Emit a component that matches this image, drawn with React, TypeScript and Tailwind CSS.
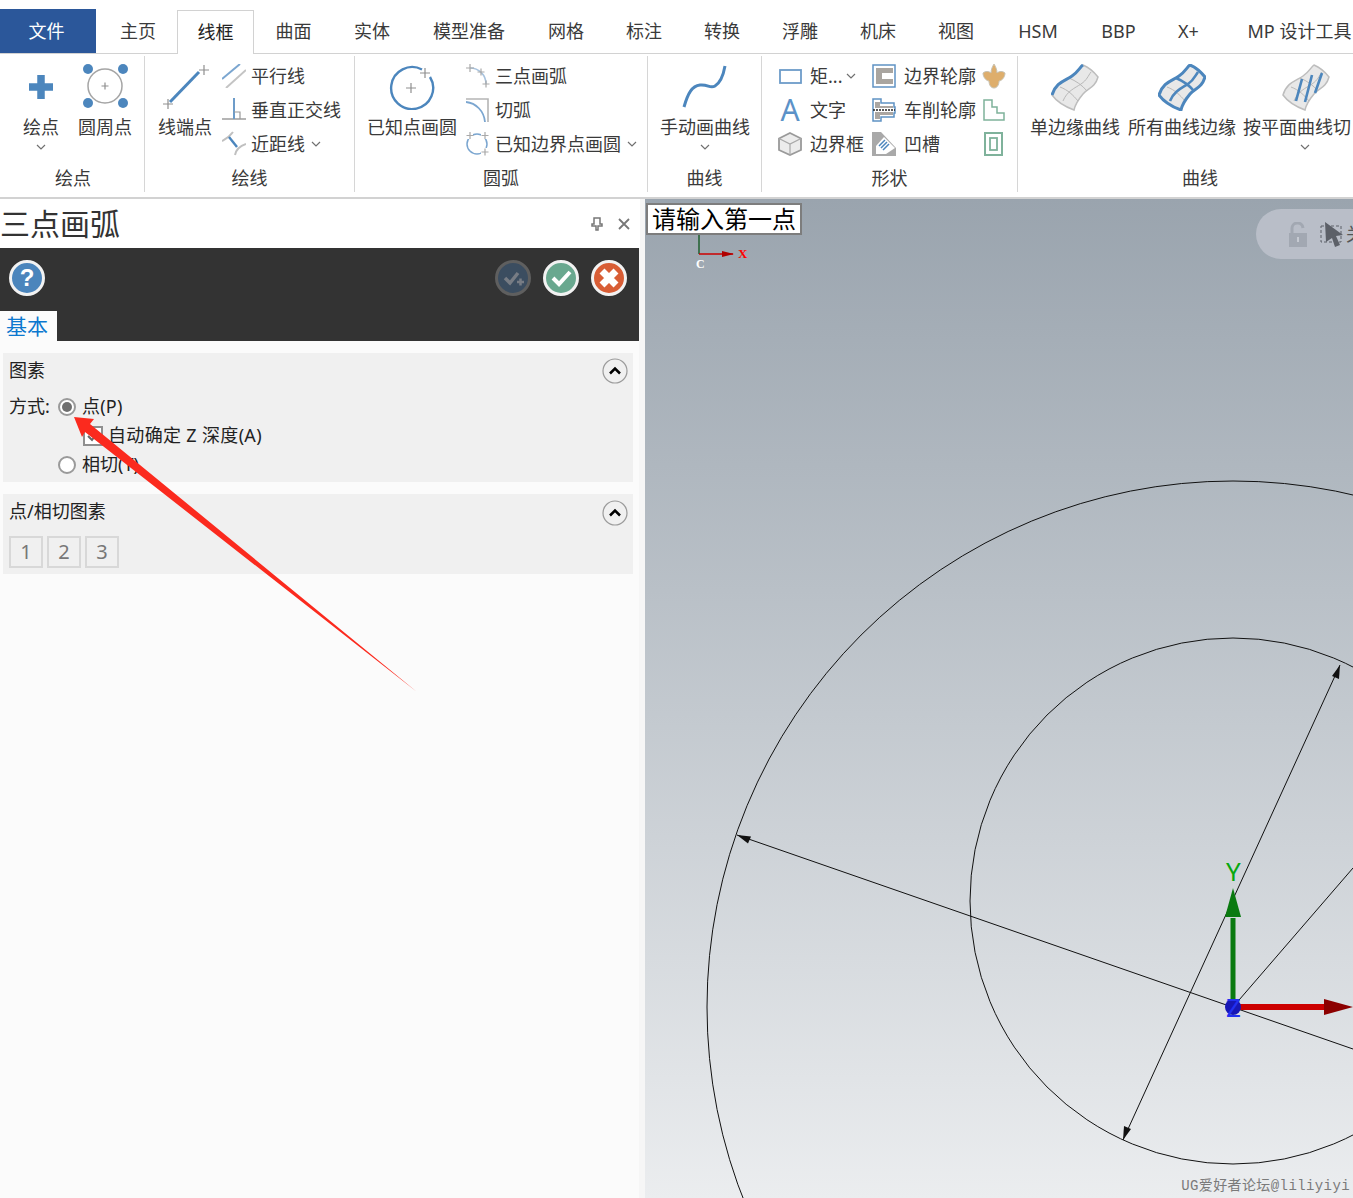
type IconProps = { className?: string }

const BLUE = "#4c86bd"
const GREY = "#8f8f8f"

const Plus = ({ x, y, s = 4, c = GREY, w = 1.2 }: { x: number; y: number; s?: number; c?: string; w?: number }) => (
  <path d={`M${x - s} ${y}H${x + s}M${x} ${y - s}V${y + s}`} stroke={c} strokeWidth={w} fill="none" />
)

const Chevron = ({ className }: IconProps) => (
  <svg width="10" height="6" viewBox="0 0 10 6" className={className}>
    <path d="M1 1l4 4 4-4" fill="none" stroke="#707070" strokeWidth="1.2" />
  </svg>
)

const CrossIcon = () => (
  <svg width="26" height="26" viewBox="0 0 26 26">
    <path d="M13 1v24M1 13h24" stroke={BLUE} strokeWidth="7.5" />
  </svg>
)

const CirclePointsIcon = () => (
  <svg width="46" height="46" viewBox="0 0 46 46">
    <circle cx="23" cy="22" r="17" fill="none" stroke="#a5a5a5" strokeWidth="1.5" />
    <Plus x={23} y={22} s={3.5} />
    <circle cx="6" cy="5" r="5" fill={BLUE} />
    <circle cx="41" cy="5" r="5" fill={BLUE} />
    <circle cx="6" cy="39" r="5" fill={BLUE} />
    <circle cx="41" cy="39" r="5" fill={BLUE} />
  </svg>
)

const LineIcon = () => (
  <svg width="48" height="46" viewBox="0 0 48 46">
    <path d="M9 38L38 8" stroke={BLUE} strokeWidth="3" />
    <Plus x={43} y={6} s={5} />
    <Plus x={7} y={40} s={5} />
  </svg>
)

const ParallelIcon = () => (
  <svg width="24" height="24" viewBox="0 0 24 24">
    <path d="M0 15L18 0" stroke="#7ba6d0" strokeWidth="2" />
    <path d="M4 24L24 6" stroke="#c4c4c4" strokeWidth="2" />
  </svg>
)

const PerpIcon = () => (
  <svg width="24" height="24" viewBox="0 0 24 24">
    <path d="M0 21H24" stroke="#b5b5b5" strokeWidth="2" />
    <path d="M12 0V21" stroke="#6d9cc9" strokeWidth="2" />
    <path d="M12 14H18V21" stroke="#9a9a9a" strokeWidth="1.2" fill="none" />
  </svg>
)

const ClosestIcon = () => (
  <svg width="24" height="26" viewBox="0 0 24 26">
    <path d="M0 10C4 8 8 5 11 1" stroke="#c0c0c0" strokeWidth="2" fill="none" />
    <path d="M13 24C14 19 18 15 24 13" stroke="#c0c0c0" strokeWidth="2" fill="none" />
    <path d="M7 6L15 16" stroke={BLUE} strokeWidth="2.4" />
  </svg>
)

const KnownPointCircleIcon = () => (
  <svg width="46" height="46" viewBox="0 0 46 46">
    <path d="M33 5.500A21 21 0 1 0 41 13" fill="none" stroke={BLUE} strokeWidth="2.4" />
    <Plus x={22} y={24} s={5} />
    <Plus x={36} y={9} s={5} />
  </svg>
)

const ThreePointArcIcon = () => (
  <svg width="24" height="24" viewBox="0 0 24 24">
    <path d="M4 4A16 16 0 0 1 20 20" fill="none" stroke="#a8c3de" strokeWidth="1.6" />
    <Plus x={4} y={4} s={4} c="#a9a9a9" />
    <Plus x={15} y={8} s={3.500} c="#a9a9a9" />
    <Plus x={20} y={20} s={3.500} c="#a9a9a9" />
  </svg>
)

const TangentArcIcon = () => (
  <svg width="24" height="24" viewBox="0 0 24 24">
    <path d="M0 1H22V24" fill="none" stroke="#b5b5b5" strokeWidth="1.600" />
    <path d="M0 4C10 5 18 13 19 24" fill="none" stroke="#7ba6d0" strokeWidth="1.800" />
  </svg>
)

const BoundaryCircleIcon = () => (
  <svg width="24" height="24" viewBox="0 0 24 24">
    <circle cx="11" cy="12" r="10" fill="none" stroke="#7ba6d0" strokeWidth="1.500" />
    <path d="M0 0h7v7H0zM15 0h9v7h-9zM15 16h9v8h-9z" fill="#ffffff" />
    <Plus x={4} y={3.500} s={3.500} c="#a9a9a9" />
    <Plus x={19} y={3.500} s={3.500} c="#a9a9a9" />
    <Plus x={19} y={20} s={3.500} c="#a9a9a9" />
  </svg>
)

const CurveIcon = () => (
  <svg width="46" height="46" viewBox="0 0 46 46">
    <path d="M2 43C6 29 10 22 18 21S28 25 33 22S41 13 43 2" fill="none" stroke={BLUE} strokeWidth="3" />
  </svg>
)

const RectIcon = () => (
  <svg width="24" height="24" viewBox="0 0 24 24">
    <rect x="2" y="6" width="21" height="13" fill="none" stroke="#6d9cc9" strokeWidth="1.800" />
  </svg>
)

const CubeIcon = () => (
  <svg width="24" height="24" viewBox="0 0 24 24">
    <path d="M12 1L23 6.500V18L12 23L1 18V6.500Z" fill="#ececec" stroke="#9a9a9a" strokeWidth="1.800" />
    <path d="M1 6.500L12 12L23 6.500M12 12V23" fill="none" stroke="#a8a8a8" strokeWidth="1.200" />
  </svg>
)

const BoundaryProfileIcon = () => (
  <svg width="24" height="24" viewBox="0 0 24 24">
    <rect x="1" y="1" width="22" height="22" fill="#ffffff" stroke="#5f92c4" strokeWidth="1.500" />
    <path d="M4 4H21V9H10V15H21V20H4Z" fill="#a9a5a0" />
  </svg>
)

const TurnProfileIcon = () => (
  <svg width="24" height="24" viewBox="0 0 24 24">
    <path d="M1 1H9V5H22V9H23V15H22V19H9V23H1Z" fill="#ffffff" stroke="#5f92c4" strokeWidth="1.500" />
    <path d="M3 4H8V8H21V10H3ZM3 14H21V17H8V21H3Z" fill="#aaa6a2" />
    <path d="M1 12H23" stroke="#222" strokeWidth="1.600" strokeDasharray="2 1" />
  </svg>
)

const GrooveIcon = () => (
  <svg width="24" height="24" viewBox="0 0 24 24">
    <path d="M0 0H9L24 16V24H0Z" fill="#a9a9a9" />
    <path d="M12 5L23 16L14 22H4V14Z" fill="#ffffff" />
    <path d="M7 14L13 8M9 16L15 10M11 18L17 12" stroke={BLUE} strokeWidth="1.500" />
  </svg>
)

const HandIcon = () => (
  <svg width="24" height="25" viewBox="0 0 24 25">
    <path
      d="M12 0C14 3 15 6 15 9C17 7 21 7 23 9C23 14 19 17 17 17C17 21 15 24 12 24C9 24 7 21 7 17C5 17 1 14 1 9C3 7 7 7 9 9C9 6 10 3 12 0Z"
      fill="#deae6c"
      stroke="#c8c3b4"
    />
  </svg>
)

const StairIcon = () => (
  <svg width="24" height="24" viewBox="0 0 24 24">
    <path d="M2 2H10V9H15V15H22V22H2Z" fill="none" stroke="#7fb29b" strokeWidth="1.500" />
  </svg>
)

const FrameIcon = () => (
  <svg width="24" height="24" viewBox="0 0 24 24">
    <rect x="3" y="1" width="17" height="22" fill="none" stroke="#7fb29b" strokeWidth="2" />
    <rect x="8" y="6" width="7" height="12" fill="none" stroke="#7fb29b" strokeWidth="1.800" />
  </svg>
)

const SURFACE = "M1 31C5 18 14 17 21 12S29 3 32 1C37 3 43 8 47 13C44 24 37 24 32 30S24 41 23 46C15 43 6 38 1 31Z"

const SurfaceIcon = ({ kind }: { kind: 1 | 2 | 3 }) => (
  <svg width="48" height="47" viewBox="0 0 48 47">
    <path d={SURFACE} fill="#e8e8e8" stroke="#bdbdbd" strokeWidth="1.500" />
    <path d="M9 23C17 26 22 31 27 37M18 14C25 17 31 21 36 27M12 37C16 27 24 24 30 20S37 12 40 8" fill="none" stroke="#b8b8b8" />
    {kind === 1 && <path d="M1 31C5 18 14 17 21 12S29 3 32 1" fill="none" stroke={BLUE} strokeWidth="3" />}
    {kind === 2 && (
      <>
        <path d={SURFACE} fill="none" stroke={BLUE} strokeWidth="3" />
        <path d="M12 37C16 27 24 24 30 20S37 12 40 8M18 14C25 17 31 21 36 27" fill="none" stroke={BLUE} strokeWidth="2.600" />
      </>
    )}
    {kind === 3 && <path d="M14 37L20 15M23 38L30 11M33 29L40 9" fill="none" stroke={BLUE} strokeWidth="2.600" />}
  </svg>
)

const Round = ({ bg, ring, children }: { bg: string; ring: string; children: React.ReactNode }) => (
  <svg width="36" height="36" viewBox="0 0 36 36">
    <circle cx="18" cy="18" r="16.500" fill={bg} stroke={ring} strokeWidth="3" />
    {children}
  </svg>
)

const Collapse = () => (
  <svg width="26" height="26" viewBox="0 0 26 26" className="mr-[-1px] mt-[2px]">
    <circle cx="13" cy="13" r="12" fill="#f0f0f0" stroke="#9b9b9b" strokeWidth="1.200" />
    <path d="M8 15.500l5-5 5 5" fill="none" stroke="#000" strokeWidth="2.500" />
  </svg>
)

const Radio = ({ on }: { on?: boolean }) => (
  <span className="flex h-[18px] w-[18px] shrink-0 items-center justify-center rounded-full border-2 border-[#9a9a9a] bg-white">
    {on && <span className="h-[10px] w-[10px] rounded-full bg-[#6f6f6f]" />}
  </span>
)

const Large = ({ icon, label, chevron, w, chevronClass = "mt-[5px]" }: { icon: React.ReactNode; label: string; chevron?: boolean; w: string; chevronClass?: string }) => (
  <div className={`flex shrink-0 flex-col items-center ${w}`}>
    <div className="flex h-[46px] items-center justify-center">{icon}</div>
    <div className="mt-[5px] h-[24px] whitespace-nowrap leading-[24px]">{label}</div>
    {chevron && <Chevron className={chevronClass} />}
  </div>
)

const Small = ({ icon, label, chevron, gap = "gap-[5px]", chevronClass = "ml-[1px]" }: { icon: React.ReactNode; label?: string; chevron?: boolean; gap?: string; chevronClass?: string }) => (
  <div className={`flex h-[34px] items-center ${gap}`}>
    <div className="flex w-[24px] shrink-0 justify-center">{icon}</div>
    {label && <span className="whitespace-nowrap">{label}</span>}
    {chevron && <Chevron className={chevronClass} />}
  </div>
)

const Group = ({ label, className, children }: { label: string; className: string; children: React.ReactNode }) => (
  <div className={`mt-[2px] flex h-[136px] shrink-0 flex-col ${className}`}>
    <div className="flex flex-1 items-start">{children}</div>
    <div className="mb-[2px] h-[24px] text-center leading-[24px]">{label}</div>
  </div>
)

const tabs = [
  { t: "主页", w: "w-[78px]" },
  { t: "线框", w: "w-[77px]", active: true },
  { t: "曲面", w: "w-[79px]" },
  { t: "实体", w: "w-[78px]" },
  { t: "模型准备", w: "w-[116px]" },
  { t: "网格", w: "w-[78px]" },
  { t: "标注", w: "w-[78px]" },
  { t: "转换", w: "w-[78px]" },
  { t: "浮雕", w: "w-[78px]" },
  { t: "机床", w: "w-[78px]" },
  { t: "视图", w: "w-[78px]" },
  { t: "HSM", w: "w-[86px]" },
  { t: "BBP", w: "w-[75px]" },
  { t: "X+", w: "w-[65px]" },
  { t: "MP 设计工具", w: "w-[157px]" },
]

const Viewport = () => (
  <div className="relative flex-1 overflow-hidden bg-linear-to-b from-[#9aa4ae] to-[#ebedef]">
    <svg viewBox="645 199 708 999" width="708" height="999" className="block">
      {/* wireframe */}
      <g fill="none" stroke="#111" strokeWidth="1">
        <circle cx="1233" cy="1007" r="526" />
        <circle cx="1233" cy="901" r="263" />
        <path d="M737 835L1353 1049" />
        <path d="M1123 1140L1340 665" />
        <path d="M1233 1007L1353 868" />
      </g>
      <path d="M737 835l14 1.500-3 7z" fill="#111" />
      <path d="M1340 665l-1 14-7-3z" fill="#111" />
      <path d="M1123 1140l1-14 7 3z" fill="#111" />
      {/* small axis */}
      <path d="M699 234V254" stroke="#1f5f2f" strokeWidth="1.500" />
      <path d="M699 254H733" stroke="#c00" strokeWidth="1.500" />
      <path d="M722 251L734 254L722 257Z" fill="#b00000" />
      <text x="738" y="258" fill="#f00" fontSize="13" fontWeight="700" fontFamily="Liberation Serif">X</text>
      <text x="696" y="268" fill="#fff" fontSize="12" fontWeight="700" fontFamily="Liberation Serif">C</text>
      {/* origin triad */}
      <path d="M1233 918V1000" stroke="#0a7a10" strokeWidth="5" />
      <path d="M1233 888L1241 917H1225Z" fill="#0a7a10" />
      <path d="M1240 1007H1325" stroke="#cc0000" strokeWidth="6" />
      <path d="M1324 999L1353 1007L1324 1015Z" fill="#8c0000" />
      <circle cx="1233" cy="1007" r="8" fill="#1717b5" />
      <text x="1226" y="881" fill="#07a80f" fontSize="26" fontFamily="Noto Sans">Y</text>
      <text x="1226" y="1017" fill="#2230f0" fontSize="26" fontFamily="Noto Sans">Z</text>
    </svg>

    <div className="absolute left-[1px] top-[4px] flex h-[32px] w-[156px] items-center justify-center border-2 border-[#7d7d7d] bg-white pb-[1px] text-[24px] leading-none text-black">
      请输入第一点
    </div>

    <div className="absolute left-[611px] top-[10px] flex h-[50px] w-[120px] items-center overflow-hidden rounded-l-full bg-[#b9bec8]">
      <svg width="20" height="25" viewBox="0 0 20 25" className="ml-[32px] shrink-0">
        <path d="M4 11V7A5.500 5.500 0 0 1 15 6" fill="none" stroke="#a2a8b2" strokeWidth="3" />
        <rect x="1" y="11" width="18" height="14" fill="#a2a8b2" />
        <rect x="9" y="15" width="2" height="5" fill="#c6cad2" />
      </svg>
      <svg width="24" height="26" viewBox="0 0 24 26" className="ml-[12px] shrink-0">
        <rect x="1" y="5" width="20" height="16" fill="none" stroke="#5c6068" strokeDasharray="3 2" />
        <path d="M5 1L23 14L16 15L20 24L15 26L12 17L6 21Z" fill="#5c6068" />
      </svg>
      <span className="ml-[2px] shrink-0 whitespace-nowrap text-[18px] text-[#555]">关闭</span>
    </div>

    <div className="absolute bottom-[3px] right-[3px] font-['Liberation_Mono','Noto_Sans_CJK_SC',monospace] text-[14px] leading-[17px] tracking-[0.4px] text-[#7a7a7a]">
      UG爱好者论坛@liliyiyi
    </div>
  </div>
)

const App = () => {
  return (
    <div className="relative flex h-[1198px] w-full flex-col overflow-hidden bg-white font-['Noto_Sans','Noto_Sans_CJK_SC',sans-serif] text-[18px] text-[#3a3a3a]">
      {/* tabs */}
      <div className="flex h-[54px] shrink-0 items-end border-b border-[#d2d2d2] whitespace-nowrap">
        <div className="flex h-[44px] w-[96px] shrink-0 items-center justify-center bg-[#2b579a] pr-[3px] text-white">文件</div>
        <div className="ml-[3px] flex items-end">
          {tabs.map((tab) =>
            tab.active ? (
              <div
                key={tab.t}
                className={`-mb-px flex h-[44px] shrink-0 items-center justify-center border-x border-t border-[#d2d2d2] bg-white text-[#222] ${tab.w}`}
              >
                {tab.t}
              </div>
            ) : (
              <div key={tab.t} className={`flex h-[44px] shrink-0 items-center justify-center ${tab.w}`}>
                {tab.t}
              </div>
            ),
          )}
        </div>
      </div>

      {/* ribbon */}
      <div className="flex h-[145px] shrink-0 border-b-2 border-[#d2d2d2]">
        <Group label="绘点" className="w-[145px] border-r border-[#d6d6d6] pl-[2px]">
          <div className="flex pl-[21px] pt-[8px]">
            <Large w="w-[36px]" icon={<CrossIcon />} label="绘点" chevron />
            <Large w="ml-[19px] w-[54px]" icon={<CirclePointsIcon />} label="圆周点" />
          </div>
        </Group>
        <Group label="绘线" className="w-[210px] border-r border-[#d6d6d6]">
          <div className="flex pl-[13px] pt-[8px]">
            <Large w="w-[54px]" icon={<LineIcon />} label="线端点" />
            <div className="-mt-[5px] ml-[10px]">
              <Small icon={<ParallelIcon />} label="平行线" />
              <Small icon={<PerpIcon />} label="垂直正交线" />
              <Small icon={<ClosestIcon />} label="近距线" chevron />
            </div>
          </div>
        </Group>
        <Group label="圆弧" className="w-[293px] border-r border-[#d6d6d6]">
          <div className="flex pl-[12px] pt-[8px]">
            <Large w="w-[90px]" icon={<KnownPointCircleIcon />} label="已知点画圆" />
            <div className="-mt-[5px] ml-[9px]">
              <Small icon={<ThreePointArcIcon />} label="三点画弧" />
              <Small icon={<TangentArcIcon />} label="切弧" />
              <Small icon={<BoundaryCircleIcon />} label="已知边界点画圆" chevron />
            </div>
          </div>
        </Group>
        <Group label="曲线" className="w-[114px] border-r border-[#d6d6d6]">
          <div className="pl-[12px] pt-[8px]">
            <Large w="w-[90px]" icon={<CurveIcon />} label="手动画曲线" chevron />
          </div>
        </Group>
        <Group label="形状" className="w-[256px] border-r border-[#d6d6d6]">
          <div className="flex pl-[16px] pt-[3px]">
            <div className="w-[94px]">
              <Small gap="gap-[8px]" icon={<RectIcon />} label="矩..." chevron chevronClass="-ml-[4px]" />
              <Small gap="gap-[8px]" icon={<span className="text-[30px] leading-none text-[#5c92c8]">A</span>} label="文字" />
              <Small gap="gap-[8px]" icon={<CubeIcon />} label="边界框" />
            </div>
            <div className="w-[110px]">
              <Small gap="gap-[8px]" icon={<BoundaryProfileIcon />} label="边界轮廓" />
              <Small gap="gap-[8px]" icon={<TurnProfileIcon />} label="车削轮廓" />
              <Small gap="gap-[8px]" icon={<GrooveIcon />} label="凹槽" />
            </div>
            <div>
              <Small icon={<HandIcon />} />
              <Small icon={<StairIcon />} />
              <Small icon={<FrameIcon />} />
            </div>
          </div>
        </Group>
        <Group label="曲线" className="w-[364px]">
          <div className="flex pl-[12px] pt-[8px]">
            <Large w="w-[90px]" icon={<SurfaceIcon kind={1} />} label="单边缘曲线" />
            <Large w="ml-[8px] w-[108px]" icon={<SurfaceIcon kind={2} />} label="所有曲线边缘" />
            <Large
              w="ml-[7px] w-[108px]"
              icon={
                <span className="ml-[18px] block">
                  <SurfaceIcon kind={3} />
                </span>
              }
              label="按平面曲线切"
              chevron
              chevronClass="ml-[16px] mt-[5px]"
            />
          </div>
        </Group>
      </div>

      <div className="flex min-h-0 flex-1">
        {/* left panel */}
        <div className="flex w-[645px] shrink-0 flex-col bg-[#f6f6f6]">
          <div className="flex h-[49px] w-[640px] shrink-0 items-center justify-between bg-white pr-[10px]">
            <span className="text-[30px] leading-none text-[#333]">三点画弧</span>
            <div className="flex items-center gap-[15px]">
              <svg width="12" height="14" viewBox="0 0 12 14">
                <path d="M3 1H9V7H11V9H7V13H5V9H1V7H3Z" fill="none" stroke="#777" strokeWidth="1.500" />
              </svg>
              <svg width="12" height="12" viewBox="0 0 12 12">
                <path d="M1 1L11 11M11 1L1 11" stroke="#777" strokeWidth="1.800" />
              </svg>
            </div>
          </div>
          <div className="flex h-[93px] w-[639px] shrink-0 flex-col justify-between bg-[#333333]">
            <div className="flex h-[60px] items-center justify-between pl-[9px] pr-[12px]">
              <Round bg="#4b85bc" ring="#f2f2f2">
                <text x="18" y="26" textAnchor="middle" fill="#fff" fontSize="24" fontWeight="700" fontFamily="Liberation Sans">
                  ?
                </text>
              </Round>
              <div className="flex gap-[12px]">
                <Round bg="#3b4d60" ring="#5f5f5f">
                  <path d="M10 18l5 5 8-10" fill="none" stroke="#777c84" strokeWidth="3.500" />
                  <path d="M22 22h7M25.500 18.500v7" stroke="#777c84" strokeWidth="2.500" />
                </Round>
                <Round bg="#69a88f" ring="#f2f2f2">
                  <path d="M10 18l6 6 11-12" fill="none" stroke="#fff" strokeWidth="4" />
                </Round>
                <Round bg="#d85d35" ring="#f2f2f2">
                  <path d="M11 11L25 25M25 11L11 25" stroke="#fff" strokeWidth="7" />
                </Round>
              </div>
            </div>
            <div className="flex h-[30px] w-[57px] items-center justify-center bg-[#fbfbfb] pr-[3px] text-[21px] leading-none text-[#0b78cf]">
              基本
            </div>
          </div>
          <div className="flex w-[639px] flex-1 flex-col gap-[12px] bg-[#fbfbfb] px-[3px] pt-[12px] text-[#222]">
            <section className="h-[129px] w-[630px] bg-[#f0f0f0]">
              <div className="flex h-[36px] items-center justify-between px-[6px] pb-[2px]">
                <span>图素</span>
                <Collapse />
              </div>
              <div className="mt-[3px] flex h-[29px] items-center pl-[6px]">
                <span className="w-[49px]">方式:</span>
                <Radio on />
                <span className="ml-[6px] tracking-[0.2px]">点(P)</span>
              </div>
              <div className="flex h-[29px] items-center pl-[80px]">
                <span className="flex h-[20px] w-[20px] items-center justify-center border-2 border-[#8f8f8f] bg-white">
                  <svg width="14" height="12" viewBox="0 0 14 12">
                    <path d="M2 6l4 4 6-8" fill="none" stroke="#666" strokeWidth="2" />
                  </svg>
                </span>
                <span className="ml-[5px] tracking-[0.33px]">自动确定 Z 深度(A)</span>
              </div>
              <div className="flex h-[29px] items-center pl-[55px]">
                <Radio />
                <span className="ml-[6px]">相切(T)</span>
              </div>
            </section>
            <section className="h-[80px] w-[630px] bg-[#f0f0f0]">
              <div className="flex h-[36px] items-center justify-between px-[6px] pb-[1px]">
                <span>点/相切图素</span>
                <Collapse />
              </div>
              <div className="mt-[6px] flex gap-[4px] pl-[6px]">
                {["1", "2", "3"].map((n) => (
                  <div
                    key={n}
                    className="flex h-[32px] w-[34px] items-center justify-center border-2 border-[#d8d8d8] text-[20px] leading-none text-[#777]"
                  >
                    {n}
                  </div>
                ))}
              </div>
            </section>
          </div>
        </div>
        <Viewport />
      </div>

      {/* annotation arrow */}
      <svg className="pointer-events-none absolute left-0 top-0" width="645" height="700" viewBox="0 0 645 700">
        <path d="M74 417L94 419L90 424L417 692L85 432L82 437Z" fill="#fb2a1e" />
      </svg>
    </div>
  )
}

export default App
